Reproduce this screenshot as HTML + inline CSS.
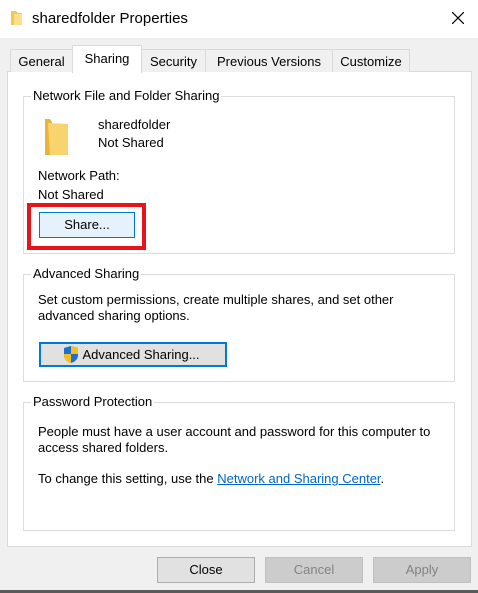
<!DOCTYPE html><html><head><style>
body{margin:0;width:478px;height:593px;background:#f0f0f0;font-family:"Liberation Sans",sans-serif;font-size:13px;color:#000;position:relative;overflow:hidden}
.a{position:absolute;white-space:nowrap}
.tab{position:absolute;top:49px;height:23px;border:1px solid #d9d9d9;border-bottom:none;background:#f0f0f0;text-align:center;line-height:23px;box-sizing:border-box}
.grp{position:absolute;border:1px solid #dcdcdc;box-sizing:border-box}
.lg{position:absolute;top:-9px;left:7px;background:#fff;padding:0 2px}
.btn{position:absolute;box-sizing:border-box;text-align:center;border:1px solid #adadad;background:#e1e1e1}
</style></head><body>
<div class="a" style="left:0;top:0;width:478px;height:38px;background:#fff"></div>
<svg class="a" style="left:10px;top:10px" width="13" height="16"><path d="M1 1h5l2 2h4v12H1z" fill="#f5c94f"/><path d="M4 4h8v11H4z" fill="#ffe08a"/></svg>
<div class="a" style="left:32px;top:10px;font-size:15px">sharedfolder Properties</div>
<svg class="a" style="left:452px;top:12px" width="12" height="12"><path d="M0 0L12 12M12 0L0 12" stroke="#000" stroke-width="1.2"/></svg>
<div class="a" style="left:7px;top:71px;width:465px;height:476px;background:#fff;border:1px solid #d9d9d9;box-sizing:border-box"></div>
<div class="tab" style="left:10px;width:63px">General</div>
<div class="tab" style="left:72px;width:70px;top:45px;height:28px;background:#fff;line-height:26px">Sharing</div>
<div class="tab" style="left:141px;width:65px">Security</div>
<div class="tab" style="left:205px;width:128px">Previous Versions</div>
<div class="tab" style="left:332px;width:78px">Customize</div>
<div class="grp" style="left:23px;top:96px;width:432px;height:158px"><span class="lg" style="left:7px">Network File and Folder Sharing</span></div>
<svg class="a" style="left:45px;top:119px" width="24" height="36"><path d="M0 0h5l2 3v33H0z" fill="#e8b53a"/><path d="M3 4l20 1v31H5z" fill="#f7d46e"/></svg>
<div class="a" style="left:98px;top:117px">sharedfolder</div>
<div class="a" style="left:98px;top:135px">Not Shared</div>
<div class="a" style="left:38px;top:168px">Network Path:</div>
<div class="a" style="left:38px;top:187px">Not Shared</div>
<div class="a" style="left:27px;top:203px;width:119px;height:47px;border:4px solid #e8141c;box-sizing:border-box"></div>
<div class="btn" style="left:39px;top:212px;width:96px;height:26px;line-height:24px;background:#e5f1fb;border-color:#0078d7">Share...</div>
<div class="grp" style="left:23px;top:274px;width:432px;height:108px"><span class="lg">Advanced Sharing</span></div>
<div class="a" style="left:38px;top:292px;line-height:16px">Set custom permissions, create multiple shares, and set other<br>advanced sharing options.</div>
<div class="btn" style="left:39px;top:342px;width:188px;height:25px;line-height:21px;border:2px solid #0078d7;padding-left:16px">Advanced Sharing...</div>
<svg class="a" style="left:62px;top:345px" width="18" height="19"><path d="M9 1L16 3v7c0 4-3 7-7 8-4-1-7-4-7-8V3z" fill="#1f6fd1"/><path d="M9 1v8h7V3zM2 9v1c0 4 3 7 7 8V9z" fill="#f4c01e"/></svg>
<div class="grp" style="left:23px;top:402px;width:432px;height:129px"><span class="lg">Password Protection</span></div>
<div class="a" style="left:38px;top:424px;line-height:16px">People must have a user account and password for this computer to<br>access shared folders.</div>
<div class="a" style="left:38px;top:471px">To change this setting, use the <span style="color:#0066cc;text-decoration:underline">Network and Sharing Center</span>.</div>
<div class="btn" style="left:157px;top:557px;width:98px;height:26px;line-height:24px">Close</div>
<div class="btn" style="left:265px;top:557px;width:98px;height:26px;line-height:24px;background:#cccccc;border-color:#bfbfbf;color:#838383">Cancel</div>
<div class="btn" style="left:373px;top:557px;width:98px;height:26px;line-height:24px;background:#cccccc;border-color:#bfbfbf;color:#838383">Apply</div>
<div class="a" style="left:0;top:590px;width:478px;height:3px;background:#5a5a5a"></div>
</body></html>
